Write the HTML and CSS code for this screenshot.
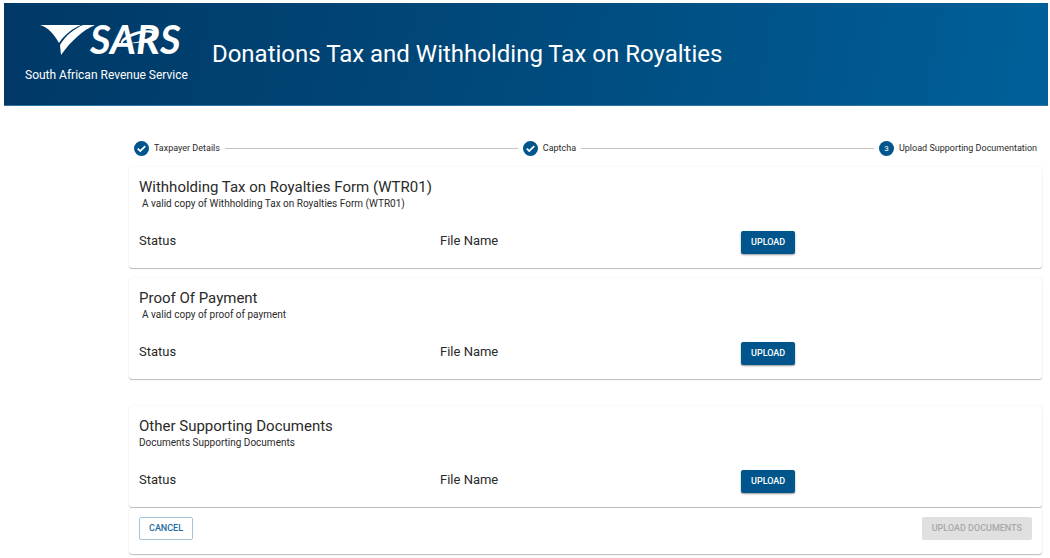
FILE: index.html
```html
<!DOCTYPE html>
<html lang="en">
<head>
    <meta charset="UTF-8">
    <meta name="viewport" content="width=device-width, initial-scale=1.0">
    <title>Donations Tax and Withholding Tax on Royalties - SARS</title>
    <link rel="stylesheet" href="styles.css">
</head>
<body>
    <header>
        <div class="logo">
            <svg class="logo-mark" viewBox="0 -7 154 50" role="img" aria-label="SARS">
                <path d="M0 4 H41 C32 8 25 13 19 22 C14 13 8 6 0 4 Z" fill="#fff"/>
                <path d="M43 4 H55 C43 9 31 20 21 34 L20 24 C26 14 34 8 43 4 Z" fill="#fff"/>
                <text class="logo-text" x="50" y="33">SARS</text>
                <path d="M82 24 C78 20 86 13 100 10 C111 8 118 10 115 14 C112 19 99 23 90 22 C101 21 110 17 112 14 C113 11 106 11 99 13 C89 16 82 20 82 24 Z" fill="#fff"/>
            </svg>
            <span>South African Revenue Service</span>
        </div>
        <h1>Donations Tax and Withholding Tax on Royalties</h1>
    </header>

    <main>
        <!-- Steps -->
        <ol class="stepper">
            <li class="step">
                <svg viewBox="0 0 24 24"><path d="M12 0a12 12 0 1 0 0 24 12 12 0 0 0 0-24zm-2 18l-5-5 2-2 3 3 7-7 2 2-9 9z"/></svg>
                <span>Taxpayer Details</span>
            </li>
            <li class="line"></li>
            <li class="step">
                <svg viewBox="0 0 24 24"><path d="M12 0a12 12 0 1 0 0 24 12 12 0 0 0 0-24zm-2 18l-5-5 2-2 3 3 7-7 2 2-9 9z"/></svg>
                <span>Captcha</span>
            </li>
            <li class="line"></li>
            <li class="step">
                <span class="number">3</span>
                <span>Upload Supporting Documentation</span>
            </li>
        </ol>

        <!-- Documents -->
        <section class="card">
            <h2>Withholding Tax on Royalties Form (WTR01)</h2>
            <p class="indent">A valid copy of Withholding Tax on Royalties Form (WTR01)</p>
            <div class="row">
                <span>Status</span>
                <span>File Name</span>
                <button type="button" class="btn upload">UPLOAD</button>
            </div>
        </section>

        <section class="card">
            <h2>Proof Of Payment</h2>
            <p class="indent">A valid copy of proof of payment</p>
            <div class="row">
                <span>Status</span>
                <span>File Name</span>
                <button type="button" class="btn upload">UPLOAD</button>
            </div>
        </section>

        <section class="card other">
            <h2>Other Supporting Documents</h2>
            <p>Documents Supporting Documents</p>
            <div class="row">
                <span>Status</span>
                <span>File Name</span>
                <button type="button" class="btn upload">UPLOAD</button>
            </div>
        </section>

        <div class="card actions">
            <button type="button" class="btn cancel">CANCEL</button>
            <button type="button" class="btn submit" disabled>UPLOAD DOCUMENTS</button>
        </div>
    </main>
</body>
</html>
```
FILE: styles.css
```css
* {
    margin: 0;
    padding: 0;
    box-sizing: border-box;
}

body {
    background-color: #fff;
    color: #2a2a2a;
    font-family: Roboto, sans-serif;
    padding: 3px 2px 0 4px;
}

header {
    background: linear-gradient(100deg, #003866, #004a7c 50%, #00609a);
    border-bottom: 1px solid #2b74a8;
    color: #fff;
    display: flex;
    align-items: center;
    gap: 24px;
    min-height: 103px;
    padding: 0 21px;
}

.logo {
    display: flex;
    flex-direction: column;
    align-items: flex-start;
    font-size: 12px;
    line-height: 16px;
}

.logo-mark {
    width: 154px;
    height: 50px;
    margin: -11px -10px 3px 15px;
}

.logo-text {
    fill: #fff;
    font-family: Lato, sans-serif;
    font-size: 40px;
    font-style: italic;
    font-weight: 700;
}

h1 {
    font-size: 24px;
    font-weight: 400;
    line-height: 32px;
}

main {
    padding: 32px 6px 0 125px;
}

.stepper {
    display: flex;
    align-items: center;
    gap: 5px;
    list-style: none;
    padding: 2px 5px;
    margin-bottom: 9px;
}

.step {
    display: flex;
    align-items: center;
    gap: 5px;
    font-size: 9px;
    line-height: 16px;
}

.step svg {
    width: 15px;
    height: 15px;
    fill: #00558c;
}

.step .number {
    width: 15px;
    height: 15px;
    border-radius: 50%;
    background-color: #00558c;
    color: #fff;
    font-size: 8px;
    line-height: 15px;
    text-align: center;
}

.line {
    flex: 1;
    border-top: 1px solid #c4c4c4;
}

.card {
    background-color: #fff;
    border-radius: 3px;
    box-shadow: 0 1px 1px rgba(0, 0, 0, 0.25), 0 0 2px rgba(0, 0, 0, 0.08);
    padding: 10px 10px 14px;
    margin-bottom: 10px;
}

.card h2 {
    font-size: 15px;
    font-weight: 400;
    line-height: 20px;
}

.card p {
    font-size: 10px;
    line-height: 14px;
}

.card .indent {
    padding-left: 3px;
}

.row {
    display: grid;
    grid-template-columns: repeat(3, 1fr);
    gap: 10px;
    margin-top: 20px;
    font-size: 13px;
    line-height: 20px;
}

.btn {
    justify-self: start;
    height: 23px;
    padding: 0 9px 1px;
    border: 1px solid transparent;
    border-radius: 2px;
    font-family: inherit;
    font-size: 9px;
    font-weight: 500;
    cursor: pointer;
}

.upload {
    background-color: #00558c;
    color: #fff;
    box-shadow: 0 1px 2px rgba(0, 0, 0, 0.4);
}

.card.other {
    margin-top: 27px;
    margin-bottom: 1px;
}

.card.actions {
    display: flex;
    justify-content: space-between;
    padding-top: 9px;
}

.cancel {
    background-color: #fff;
    border-color: #a5c3d8;
    color: #1c6c9f;
}

.submit {
    background-color: #e0e0e0;
    color: #a9a9a9;
    cursor: default;
}
```
